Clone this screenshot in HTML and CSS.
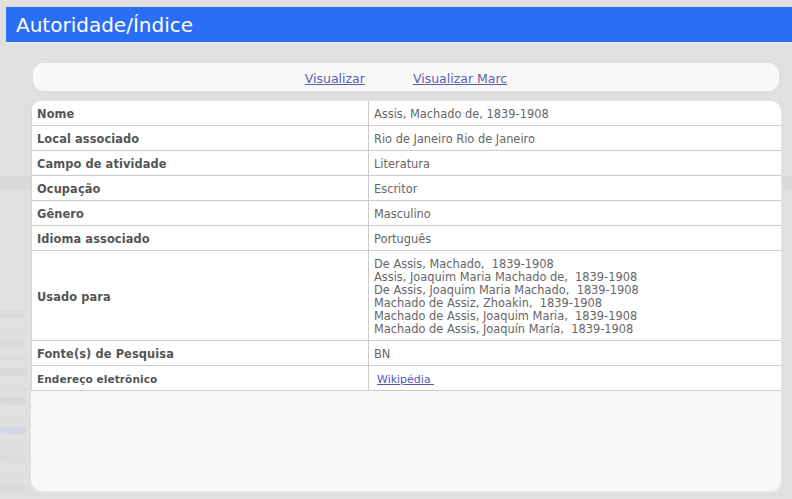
FILE: index.html
```html
<!DOCTYPE html>
<html lang="pt">
<head>
<meta charset="utf-8">
<title>Autoridade/Índice</title>
<link rel="stylesheet" href="styles.css">
</head>
<body>
<div class="backdrop">
  <div class="ghost-band"></div>
  <ul class="ghost-list">
    <li></li>
    <li></li>
    <li></li>
    <li class="u"></li>
    <li class="blue"></li>
    <li></li>
    <li></li>
  </ul>
</div>
<div class="modal">
  <header class="titlebar">Autoridade/Índice</header>
  <div class="content">
    <nav class="linkbar">
      <a href="#">Visualizar</a>
      <a href="#">Visualizar Marc</a>
    </nav>
    <section class="panel">
      <table class="record">
        <tr><th>Nome</th><td>Assis, Machado de, 1839-1908</td></tr>
        <tr><th>Local associado</th><td>Rio de Janeiro Rio de Janeiro</td></tr>
        <tr><th>Campo de atividade</th><td>Literatura</td></tr>
        <tr><th>Ocupação</th><td>Escritor</td></tr>
        <tr><th>Gênero</th><td>Masculino</td></tr>
        <tr><th>Idioma associado</th><td>Português</td></tr>
        <tr><th>Usado para</th><td>De Assis, Machado,&nbsp; 1839-1908<br>Assis, Joaquim Maria Machado de,&nbsp; 1839-1908<br>De Assis, Joaquim Maria Machado,&nbsp; 1839-1908<br>Machado de Assiz, Zhoakin,&nbsp; 1839-1908<br>Machado de Assis, Joaquim Maria,&nbsp; 1839-1908<br>Machado de Assis, Joaquín María,&nbsp; 1839-1908</td></tr>
        <tr><th>Fonte(s) de Pesquisa</th><td>BN</td></tr>
        <tr class="small"><th>Endereço eletrônico</th><td><a class="wiki" href="#">Wikipédia&nbsp;</a></td></tr>
      </table>
    </section>
  </div>
</div>
</body>
</html>
```
FILE: styles.css
```css
html, body {
  margin: 0;
  padding: 0;
}
body {
  background: #e0e0e0;
  font-family: "DejaVu Sans", Verdana, sans-serif;
  width: 792px;
  height: 499px;
  overflow: hidden;
  position: relative;
}
.backdrop {
  position: absolute;
  left: 0;
  top: 0;
  width: 792px;
  height: 499px;
  z-index: 0;
}
.ghost-band {
  position: absolute;
  left: 0;
  top: 176px;
  width: 792px;
  height: 14px;
  background: #d9d9d9;
}
.ghost-list {
  position: absolute;
  left: 0;
  top: 302px;
  margin: 0;
  padding: 0;
  list-style: none;
}
.ghost-list li {
  height: 28px;
  width: 30px;
  border-bottom: 1px solid #dadada;
  position: relative;
}
.ghost-list li::before {
  content: "";
  position: absolute;
  left: 0;
  top: 8px;
  width: 26px;
  height: 8px;
  background: #dbdbdb;
  border-radius: 2px;
}
.ghost-list li.u::before { background: #d9d9d9; }
.ghost-list li.blue::before { background: #d4d6e2; }

.modal {
  position: relative;
  z-index: 1;
  padding-top: 7px;
}
.titlebar {
  margin-left: 6px;
  height: 35px;
  background: #2a6ef5;
  border-bottom: 2px solid #e6e8f0;
  color: #fff;
  font-size: 20px;
  line-height: 36px;
  padding-left: 10px;
}
.content {
  padding: 19px 11px 0 31px;
}
.linkbar {
  margin: 0 2px;
  height: 28px;
  background: #f9f9f9;
  border-radius: 11px;
  display: flex;
  justify-content: center;
  align-items: center;
  gap: 48px;
  font-size: 12.5px;
  padding-top: 2px;
  box-sizing: border-box;
}
.linkbar a {
  color: #5d5db0;
  text-decoration: underline;
}
.panel {
  margin-top: 10px;
  height: 390px;
  background: #f8f8f8;
  border-radius: 11px;
  overflow: hidden;
  box-shadow: 1px 1px 0 #e9e9e9;
}
.record {
  width: 100%;
  border-collapse: collapse;
  background: #fff;
  font-size: 11.4px;
  line-height: 13px;
}
.record th,
.record td {
  border-bottom: 1px solid #cccccc;
  padding: 7px 5px 4px 5px;
  text-align: left;
  vertical-align: middle;
}
.record th {
  width: 326px;
  color: #555;
  font-weight: bold;
  border-left: 1px solid #d4d4d4;
  border-right: 1px solid #cccccc;
  letter-spacing: 0.1px;
}
.record td {
  color: #666;
  font-weight: normal;
}
.record tr.small th {
  font-size: 10.5px;
}
.wiki {
  font-size: 11px;
  color: #5555bb;
  margin-left: 3px;
}
```
